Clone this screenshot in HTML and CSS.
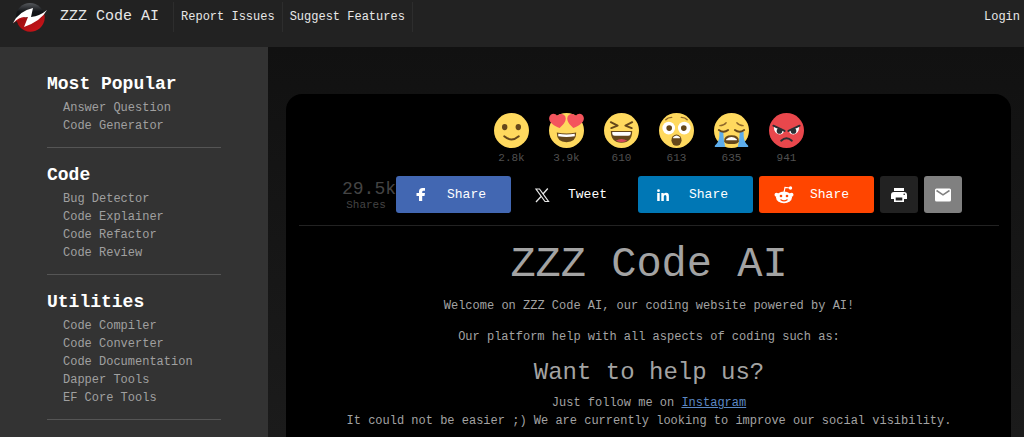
FILE: index.html
```html
<!DOCTYPE html>
<html lang="en">
<head>
<meta charset="utf-8">
<meta name="viewport" content="width=device-width, initial-scale=1">
<title>ZZZ Code AI</title>
<link rel="stylesheet" href="styles.css">
</head>
<body>
<header class="topbar">
  <a class="brand" href="#">
    <svg class="logo" viewBox="0 0 36 30" aria-hidden="true">
      <defs>
        <linearGradient id="lg-top" x1="0" y1="0" x2="0" y2="1"><stop offset="0" stop-color="#55585c"/><stop offset=".3" stop-color="#15171a"/><stop offset="1" stop-color="#000"/></linearGradient>
        <linearGradient id="lg-bot" x1="0" y1="0" x2="1" y2="1"><stop offset="0" stop-color="#8a0c0c"/><stop offset="1" stop-color="#d3151b"/></linearGradient>
      </defs>
      <circle cx="18" cy="15" r="14" fill="url(#lg-top)"/>
      <path d="M4 18 16 15 18 18 32 11A14 14 0 0 1 5 20Z" fill="url(#lg-bot)"/>
      <path d="M1 21Q7 9 21 6L19 15Q28 14 35 8 29 19 12 25L16 15Q8 15 1 21Z" fill="#fff"/>
      <path d="M1 22Q6 15 13 15L12 17Q6 17 1 22Z" fill="#b51216"/>
    </svg>
    <span class="brand-name">ZZZ Code AI</span>
  </a>
  <nav class="topnav">
    <a href="#">Report Issues</a>
    <a href="#">Suggest Features</a>
  </nav>
  <a class="login" href="#">Login</a>
</header>
<div class="layout">
  <aside class="sidebar">
    <section class="menu">
      <h2>Most Popular</h2>
      <ul>
        <li><a href="#">Answer Question</a></li>
        <li><a href="#">Code Generator</a></li>
      </ul>
    </section>
    <section class="menu">
      <h2>Code</h2>
      <ul>
        <li><a href="#">Bug Detector</a></li>
        <li><a href="#">Code Explainer</a></li>
        <li><a href="#">Code Refactor</a></li>
        <li><a href="#">Code Review</a></li>
      </ul>
    </section>
    <section class="menu">
      <h2>Utilities</h2>
      <ul>
        <li><a href="#">Code Compiler</a></li>
        <li><a href="#">Code Converter</a></li>
        <li><a href="#">Code Documentation</a></li>
        <li><a href="#">Dapper Tools</a></li>
        <li><a href="#">EF Core Tools</a></li>
      </ul>
    </section>
  </aside>
  <main class="main">
    <div class="card">
      <div class="reactions">
        <button class="reaction" type="button" aria-label="Like">
          <svg viewBox="0 0 36 36"><circle cx="18" cy="18" r="18" fill="#ffd95e"/><ellipse cx="11" cy="14.500" rx="2.800" ry="3.200" fill="#65471b"/><ellipse cx="25" cy="14.500" rx="2.800" ry="3.200" fill="#65471b"/><path d="M10.500 24Q18 30.500 25.500 24" fill="none" stroke="#65471b" stroke-width="2" stroke-linecap="round"/></svg>
          <span>2.8k</span>
        </button>
        <button class="reaction" type="button" aria-label="Love">
          <svg viewBox="0 0 36 36"><circle cx="18" cy="18" r="18" fill="#ffd95e"/><path d="M11 15.500C5 13.500-.5 9.500.2 5 1-.2 6.500-.3 8.500 3 11.500-.5 17.500 1 17.200 6 17 10 13.500 13 11 15.500Z" fill="#f4555d"/><path d="M25 15.500C31 13.500 36.500 9.500 35.800 5 35-.2 29.500-.3 27.500 3 24.500-.5 18.500 1 18.800 6 19 10 22.500 13 25 15.500Z" fill="#f4555d"/><path d="M8 20Q18 22 28 20 28 30 18 30 8 30 8 20Z" fill="#65471b"/><path d="M9.500 21.300Q18 23 26.500 21.300V24Q18 25.500 9.500 24Z" fill="#fff"/></svg>
          <span>3.9k</span>
        </button>
        <button class="reaction" type="button" aria-label="Haha">
          <svg viewBox="0 0 36 36"><circle cx="18" cy="18" r="18" fill="#ffd95e"/><path d="M7 9.500 14 13 7.500 15.500M29 9.500 22 13 28.500 15.500" fill="none" stroke="#65471b" stroke-width="2" stroke-linecap="round" stroke-linejoin="round"/><path d="M7 18.500H29Q29 30.500 18 30.500 7 30.500 7 18.500Z" fill="#65471b"/><path d="M8.500 19.500H27.500V21Q27.500 23.500 25 23.500H11Q8.500 23.500 8.500 21Z" fill="#fff"/><path d="M12 28.500Q18 25 24 28.500 18 31.500 12 28.500Z" fill="#d44958"/></svg>
          <span>610</span>
        </button>
        <button class="reaction" type="button" aria-label="Wow">
          <svg viewBox="0 0 36 36"><circle cx="18" cy="18" r="18" fill="#ffd95e"/><path d="M7 7Q9 4.500 13 4.500M29 7Q27 4.500 23 4.500" fill="none" stroke="#8f682c" stroke-width="1.500" stroke-linecap="round"/><circle cx="10" cy="15.500" r="6.500" fill="#fff"/><circle cx="26" cy="15.500" r="6.500" fill="#fff"/><circle cx="10.500" cy="15.500" r="2.900" fill="#65471b"/><circle cx="25.500" cy="15.500" r="2.900" fill="#65471b"/><ellipse cx="18" cy="28" rx="5.200" ry="5.800" fill="#65471b"/><path d="M14.500 25Q18 21.500 21.500 25V26H14.500Z" fill="#fff"/></svg>
          <span>613</span>
        </button>
        <button class="reaction" type="button" aria-label="Sad">
          <svg viewBox="0 0 36 36"><circle cx="18" cy="18" r="18" fill="#ffd95e"/><path d="M5.500 19H9.500Q9.500 26 11.500 35H1Q0 34 2.500 32 6 28 5.500 19ZM30.500 19H26.500Q26.500 26 24.500 35H35Q36 34 33.500 32 30 28 30.500 19Z" fill="#5dadec"/><path d="M6 13Q10 13 12.500 10M30 13Q26 13 23.500 10" fill="none" stroke="#8f682c" stroke-width="1.400" stroke-linecap="round"/><path d="M5 17.500Q10 21 14.500 17.500M31 17.500Q26 21 21.500 17.500" fill="none" stroke="#65471b" stroke-width="2" stroke-linecap="round"/><path d="M10.500 29Q10 23 18 23T25.500 29Q25 32 18 32T10.500 29Z" fill="#65471b"/><path d="M12.500 27Q18 22.500 23.500 27V28H12.500Z" fill="#fff"/></svg>
          <span>635</span>
        </button>
        <button class="reaction" type="button" aria-label="Angry">
          <svg viewBox="0 0 36 36"><circle cx="18" cy="18" r="18" fill="#e9474c"/><path d="M5 14 15.500 18Q15 22 10.500 22 5 21 5 14ZM31 14 20.500 18Q21 22 25.500 22 31 21 31 14Z" fill="#fff"/><circle cx="10.800" cy="18.500" r="2.900" fill="#292f33"/><circle cx="25.200" cy="18.500" r="2.900" fill="#292f33"/><path d="M4.500 13 16 18.500M31.500 13 20 18.500" stroke="#292f33" stroke-width="2" stroke-linecap="round"/><path d="M12.500 28.500Q18 23.500 23.500 28.500" fill="none" stroke="#292f33" stroke-width="2" stroke-linecap="round"/></svg>
          <span>941</span>
        </button>
      </div>
      <div class="share-row">
        <div class="total"><span class="total-count">29.5k</span><span class="total-label">Shares</span></div>
        <div class="share-buttons">
          <button class="share facebook" type="button">
            <svg viewBox="0 0 24 24" fill="#fff"><path d="M10 18V13H7.500V10H10V8.500Q10 5 13.500 5H16V7.800H14.500Q13.200 7.800 13.200 9V10H16L15.500 13H13.200V18Z"/></svg>Share
          </button>
          <button class="share twitter" type="button">
            <svg viewBox="0 0 24 24"><path d="M6 6H9.500L18.500 18.500H15Z" fill="none" stroke="#e6e6e6" stroke-width="1.200"/><path d="M17.800 5.500 13 11M11 13.500 6 19" stroke="#e6e6e6" stroke-width="1.300"/></svg>Tweet
          </button>
          <button class="share linkedin" type="button">
            <svg viewBox="0 0 24 24" fill="#fff"><circle cx="7.500" cy="7.700" r="1.400"/><path d="M6.200 10H8.700V18H6.200ZM10.300 10H12.700V11.100Q13.500 9.800 15.200 9.800 17.900 9.800 17.900 13V18H15.400V13.600Q15.400 12 14.200 12 12.800 12 12.800 13.700V18H10.300Z"/></svg>Share
          </button>
          <button class="share reddit" type="button">
            <svg viewBox="0 0 24 24"><path d="M12 9.500 13 4.500 18 5" fill="none" stroke="#fff" stroke-width="1.200"/><circle cx="18.500" cy="5" r="1.700" fill="#fff"/><circle cx="4.500" cy="11.700" r="2" fill="#fff"/><circle cx="19.500" cy="11.700" r="2" fill="#fff"/><ellipse cx="12" cy="14.300" rx="8" ry="5.900" fill="#fff"/><circle cx="9" cy="13" r="1.300" fill="#ff4500"/><circle cx="15" cy="13" r="1.300" fill="#ff4500"/><path d="M8.800 16.800Q12 19 15.200 16.800" fill="none" stroke="#ff4500" stroke-width="1.100" stroke-linecap="round"/></svg>Share
          </button>
          <button class="share icon-only print" type="button" aria-label="Print">
            <svg viewBox="0 0 24 24" fill="#fff"><path d="M7 5H17V8H7ZM7 9H17Q20 9 20 12V16H17V13H7V16H4V12Q4 9 7 9Z"/><path d="M7 13H17V19H7ZM8.700 14.500V17.500H15.300V14.500Z" fill-rule="evenodd"/><circle cx="17.200" cy="11.300" r=".8" fill="#222"/></svg>
          </button>
          <button class="share icon-only email" type="button" aria-label="Email">
            <svg viewBox="0 0 24 24"><rect x="4" y="5.500" width="16" height="13" rx="1.500" fill="#fff"/><path d="M5.500 7.500 12 11.800 18.500 7.500" fill="none" stroke="#808080" stroke-width="1.500"/></svg>
          </button>
        </div>
      </div>
      <div class="content">
        <h1>ZZZ Code AI</h1>
        <p>Welcome on ZZZ Code AI, our coding website powered by AI!</p>
        <p>Our platform help with all aspects of coding such as:</p>
        <h2>Want to help us?</h2>
        <p>Just follow me on <a href="#">Instagram</a><br>It could not be easier ;) We are currently looking to improve our social visibility.</p>
      </div>
    </div>
  </main>
</div>
</body>
</html>
```

FILE: styles.css
```css
* { box-sizing: border-box; }

body {
  margin: 0;
  min-height: 100vh;
  display: flex;
  flex-direction: column;
  background: #141414;
  color: #a3a3a3;
  font: 12px/18px "Courier New", "Liberation Mono", monospace;
}

a { color: inherit; text-decoration: none; }
h1, h2, p, ul { margin: 0; padding: 0; font-weight: 400; }
ul { list-style: none; }
button { border: 0; padding: 0; background: none; color: inherit; font: inherit; cursor: pointer; }
svg { display: block; }

.topbar {
  display: flex;
  align-items: flex-start;
  padding: 2px 4px 15px 12px;
  background: #222;
  color: #e8e8e8;
}
.brand { display: flex; gap: 12px; padding-right: 14px; }
.logo { width: 36px; height: 30px; }
.brand-name { font-size: 15px; line-height: 30px; }
.topnav { display: flex; }
.topnav a { padding: 0 7px; line-height: 30px; border-left: 1px solid #2d2d2d; }
.topnav a:last-child { border-right: 1px solid #2d2d2d; }
.login { margin-left: auto; line-height: 30px; }

.layout { flex: 1; display: flex; }

.sidebar { flex: 0 0 268px; padding: 10px 47px 0; background: #333; }
.menu { padding: 16px 0 12px; border-bottom: 1px solid #555; }
.menu h2 { margin-bottom: 4px; color: #fff; font-size: 18px; font-weight: 700; line-height: 22px; }
.menu ul { padding-left: 16px; }
.menu a { color: #a0a0a0; }

.main {
  flex: 1;
  min-width: 0;
  display: flex;
  padding: 47px 13px 0 18px;
  background: linear-gradient(#111, #1b1b1b);
}
.card { flex: 1; min-width: 0; padding: 19px 12px 0 13px; border-radius: 16px 16px 0 0; background: #000; }

.reactions { display: flex; justify-content: center; gap: 20px; }
.reaction { width: 35px; color: #505050; font-size: 11px; line-height: 18px; }
.reaction svg { width: 35px; height: 35px; margin-bottom: 1px; }
.reaction span { display: block; }

.share-row {
  display: flex;
  justify-content: center;
  padding: 9px 0 12px 6px;
  border-bottom: 1px solid #222;
}
.total { display: flex; flex-direction: column; align-items: center; padding-top: 4px; color: #444; }
.total-count { font-size: 18px; line-height: 18px; }
.total-label { padding-right: 6px; font-size: 11px; line-height: 14px; }
.share-buttons { display: flex; gap: 6px; }
.share {
  display: flex;
  align-items: center;
  gap: 14px;
  width: 115px;
  height: 37px;
  padding-left: 13px;
  border-radius: 3px;
  color: #fff;
  font-size: 13px;
}
.share svg { flex: none; width: 24px; height: 24px; }
.icon-only { justify-content: center; width: 38px; padding: 0; }
.facebook { background: #4267b2; }
.twitter { background: #000; }
.linkedin { background: #0077b5; }
.reddit { background: #ff4500; }
.print { background: #222; }
.email { background: #808080; }

.content { padding: 14px 0 6px; text-align: center; }
.content h1 { margin-bottom: 7px; font-size: 42px; line-height: 50px; }
.content p { margin-bottom: 13px; }
.content p:last-child { margin-bottom: 0; }
.content h2 { margin-bottom: 7px; font-size: 24px; line-height: 28px; }
.content a { color: #5c88c5; text-decoration: underline; }
```
